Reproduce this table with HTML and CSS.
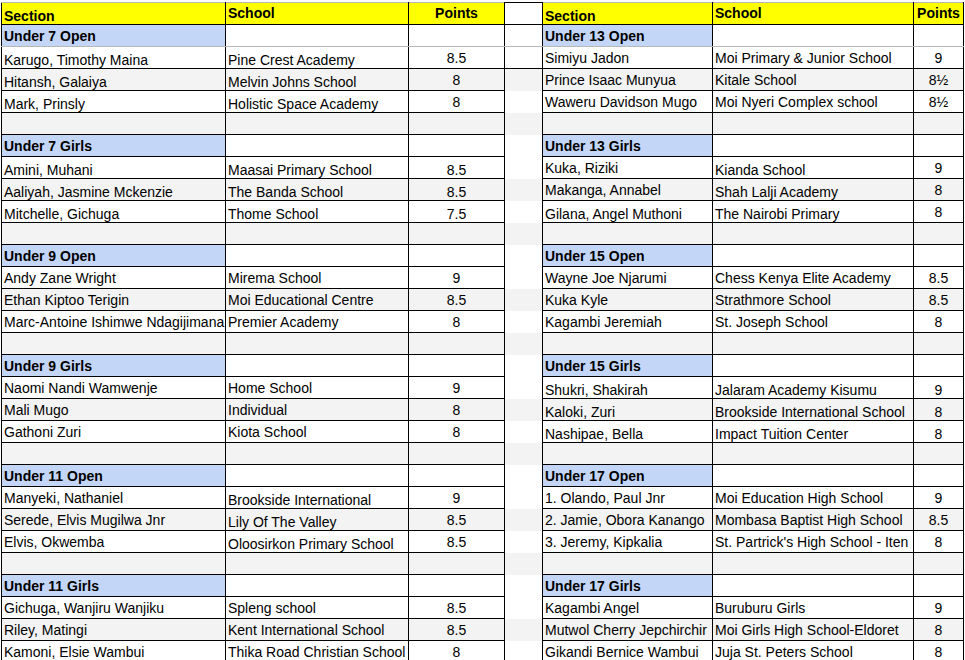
FILE: index.html
```html
<!DOCTYPE html>
<html>
<head>
<meta charset="utf-8">
<title>Results</title>
<link rel="stylesheet" href="styles.css">
</head>
<body>
<table class="sheet">
  <colgroup>
    <col class="c-sec"><col class="c-sch"><col class="c-pts"><col class="c-gap"><col class="c-sec2"><col class="c-sch2"><col class="c-pts2">
  </colgroup>
  <tbody>
    <tr class="hdr">
      <td class="h lo3">Section</td><td class="h lo1">School</td><td class="h pts lo1">Points</td><td class="gap g-top"></td><td class="h lo3">Section</td><td class="h lo1">School</td><td class="h pts lo1">Points</td>
    </tr>
    <tr class="r1">
      <td class="sec">Under 7 Open</td><td></td><td></td><td class="gap g-top"></td><td class="sec">Under 13 Open</td><td></td><td></td>
    </tr>
    <tr>
      <td class="lo">Karugo, Timothy Maina</td><td class="lo">Pine Crest Academy</td><td class="pts">8.5</td><td class="gap g-top g-bot"></td><td>Simiyu Jadon</td><td>Moi Primary &amp; Junior School</td><td class="pts">9</td>
    </tr>
    <tr class="alt">
      <td class="lo">Hitansh, Galaiya</td><td class="lo">Melvin Johns School</td><td class="pts">8</td><td class="gap"></td><td>Prince Isaac Munyua</td><td>Kitale School</td><td class="pts">8½</td>
    </tr>
    <tr>
      <td class="lo">Mark, Prinsly</td><td class="lo">Holistic Space Academy</td><td class="pts">8</td><td class="gap"></td><td>Waweru Davidson Mugo</td><td>Moi Nyeri Complex school</td><td class="pts">8½</td>
    </tr>
    <tr class="alt"><td></td><td></td><td></td><td class="gap"></td><td></td><td></td><td></td></tr>

    <tr>
      <td class="sec">Under 7 Girls</td><td></td><td></td><td class="gap"></td><td class="sec">Under 13 Girls</td><td></td><td></td>
    </tr>
    <tr>
      <td class="lo">Amini, Muhani</td><td class="lo">Maasai Primary School</td><td class="pts lo">8.5</td><td class="gap"></td><td>Kuka, Riziki</td><td class="lo">Kianda School</td><td class="pts">9</td>
    </tr>
    <tr class="alt">
      <td class="lo">Aaliyah, Jasmine Mckenzie</td><td class="lo">The Banda School</td><td class="pts lo">8.5</td><td class="gap"></td><td>Makanga, Annabel</td><td class="lo">Shah Lalji Academy</td><td class="pts">8</td>
    </tr>
    <tr>
      <td class="lo">Mitchelle, Gichuga</td><td class="lo">Thome School</td><td class="pts lo">7.5</td><td class="gap"></td><td class="lo">Gilana, Angel Muthoni</td><td class="lo">The Nairobi Primary</td><td class="pts">8</td>
    </tr>
    <tr class="alt"><td></td><td></td><td></td><td class="gap"></td><td></td><td></td><td></td></tr>

    <tr>
      <td class="sec">Under 9 Open</td><td></td><td></td><td class="gap"></td><td class="sec">Under 15 Open</td><td></td><td></td>
    </tr>
    <tr>
      <td>Andy Zane Wright</td><td>Mirema School</td><td class="pts">9</td><td class="gap"></td><td>Wayne Joe Njarumi</td><td>Chess Kenya Elite Academy</td><td class="pts">8.5</td>
    </tr>
    <tr class="alt">
      <td>Ethan Kiptoo Terigin</td><td>Moi Educational Centre</td><td class="pts">8.5</td><td class="gap"></td><td>Kuka Kyle</td><td>Strathmore School</td><td class="pts">8.5</td>
    </tr>
    <tr>
      <td>Marc-Antoine Ishimwe Ndagijimana</td><td>Premier Academy</td><td class="pts">8</td><td class="gap"></td><td>Kagambi Jeremiah</td><td>St. Joseph School</td><td class="pts">8</td>
    </tr>
    <tr class="alt"><td></td><td></td><td></td><td class="gap"></td><td></td><td></td><td></td></tr>

    <tr>
      <td class="sec">Under 9 Girls</td><td></td><td></td><td class="gap"></td><td class="sec">Under 15 Girls</td><td></td><td></td>
    </tr>
    <tr>
      <td>Naomi Nandi Wamwenje</td><td>Home School</td><td class="pts">9</td><td class="gap"></td><td class="lo">Shukri, Shakirah</td><td class="lo">Jalaram Academy Kisumu</td><td class="pts lo">9</td>
    </tr>
    <tr class="alt">
      <td>Mali Mugo</td><td>Individual</td><td class="pts">8</td><td class="gap"></td><td class="lo">Kaloki, Zuri</td><td class="lo">Brookside International School</td><td class="pts lo">8</td>
    </tr>
    <tr>
      <td>Gathoni Zuri</td><td>Kiota School</td><td class="pts">8</td><td class="gap"></td><td class="lo">Nashipae, Bella</td><td class="lo">Impact Tuition Center</td><td class="pts lo">8</td>
    </tr>
    <tr class="alt"><td></td><td></td><td></td><td class="gap"></td><td></td><td></td><td></td></tr>

    <tr>
      <td class="sec">Under 11 Open</td><td></td><td></td><td class="gap"></td><td class="sec">Under 17 Open</td><td></td><td></td>
    </tr>
    <tr>
      <td>Manyeki, Nathaniel</td><td class="lo">Brookside International</td><td class="pts">9</td><td class="gap"></td><td>1. Olando, Paul Jnr</td><td>Moi Education High School</td><td class="pts">9</td>
    </tr>
    <tr class="alt">
      <td>Serede, Elvis Mugilwa Jnr</td><td class="lo">Lily Of The Valley</td><td class="pts">8.5</td><td class="gap"></td><td>2. Jamie, Obora Kanango</td><td>Mombasa Baptist High School</td><td class="pts">8.5</td>
    </tr>
    <tr>
      <td>Elvis, Okwemba</td><td class="lo">Oloosirkon Primary School</td><td class="pts">8.5</td><td class="gap"></td><td>3. Jeremy, Kipkalia</td><td>St. Partrick's High School - Iten</td><td class="pts">8</td>
    </tr>
    <tr class="alt"><td></td><td></td><td></td><td class="gap"></td><td></td><td></td><td></td></tr>

    <tr>
      <td class="sec">Under 11 Girls</td><td></td><td></td><td class="gap"></td><td class="sec">Under 17 Girls</td><td></td><td></td>
    </tr>
    <tr>
      <td>Gichuga, Wanjiru Wanjiku</td><td>Spleng school</td><td class="pts">8.5</td><td class="gap"></td><td>Kagambi Angel</td><td>Buruburu Girls</td><td class="pts">9</td>
    </tr>
    <tr class="alt">
      <td>Riley, Matingi</td><td>Kent International School</td><td class="pts">8.5</td><td class="gap"></td><td>Mutwol Cherry Jepchirchir</td><td>Moi Girls High School-Eldoret</td><td class="pts">8</td>
    </tr>
    <tr>
      <td>Kamoni, Elsie Wambui</td><td>Thika Road Christian School</td><td class="pts">8</td><td class="gap"></td><td>Gikandi Bernice Wambui</td><td>Juja St. Peters School</td><td class="pts">8</td>
    </tr>
    <tr class="alt"><td></td><td></td><td></td><td class="gap"></td><td></td><td></td><td></td></tr>
  </tbody>
</table>
</body>
</html>
```
FILE: styles.css
```css
html, body {
  margin: 0;
  padding: 0;
  background: #ffffff;
}
body {
  padding: 2px 0 0 1px;
  font-family: "Liberation Sans", Arial, sans-serif;
  font-size: 14px;
  color: #000;
}
.sheet {
  border-collapse: collapse;
  table-layout: fixed;
  width: 962px;
}
.c-sec { width: 224px; }
.c-sch { width: 183px; }
.c-pts { width: 96px; }
.c-gap { width: 38px; }
.c-sec2 { width: 170px; }
.c-sch2 { width: 201px; }
.c-pts2 { width: 50px; }

.sheet td {
  height: 22px;
  box-sizing: border-box;
  padding: 0 2px;
  border: 1px solid #000;
  white-space: nowrap;
  overflow: hidden;
  vertical-align: middle;
  line-height: 16px;
  background: #ffffff;
}
.sheet tr.alt td { background: #f3f3f3; }
.sheet td.gap {
  background: #ffffff;
  border-top: none;
  border-bottom: none;
}
.sheet td.gap.g-top { border-top: 1px solid #000; }
.sheet td.gap.g-bot { border-bottom: 1px solid #000; }

.sheet tr.hdr td {
  border-top: 1px solid #b7b7b7;
}
.sheet tr.hdr td.h {
  background: #ffff00;
  font-weight: bold;
}
.sheet tr.r1 td { border-bottom: 1px solid #b7b7b7; }
.sheet td.sec {
  background: #c3d6f7;
  font-weight: bold;
}
.sheet td.pts { text-align: center; }
.sheet tr.hdr td.pts { text-align: center; }
.sheet td.lo { padding-top: 4px; }
.sheet td.lo1 { padding-top: 1px; padding-bottom: 2px; }
.sheet td.lo3 { padding-top: 5px; }
```
